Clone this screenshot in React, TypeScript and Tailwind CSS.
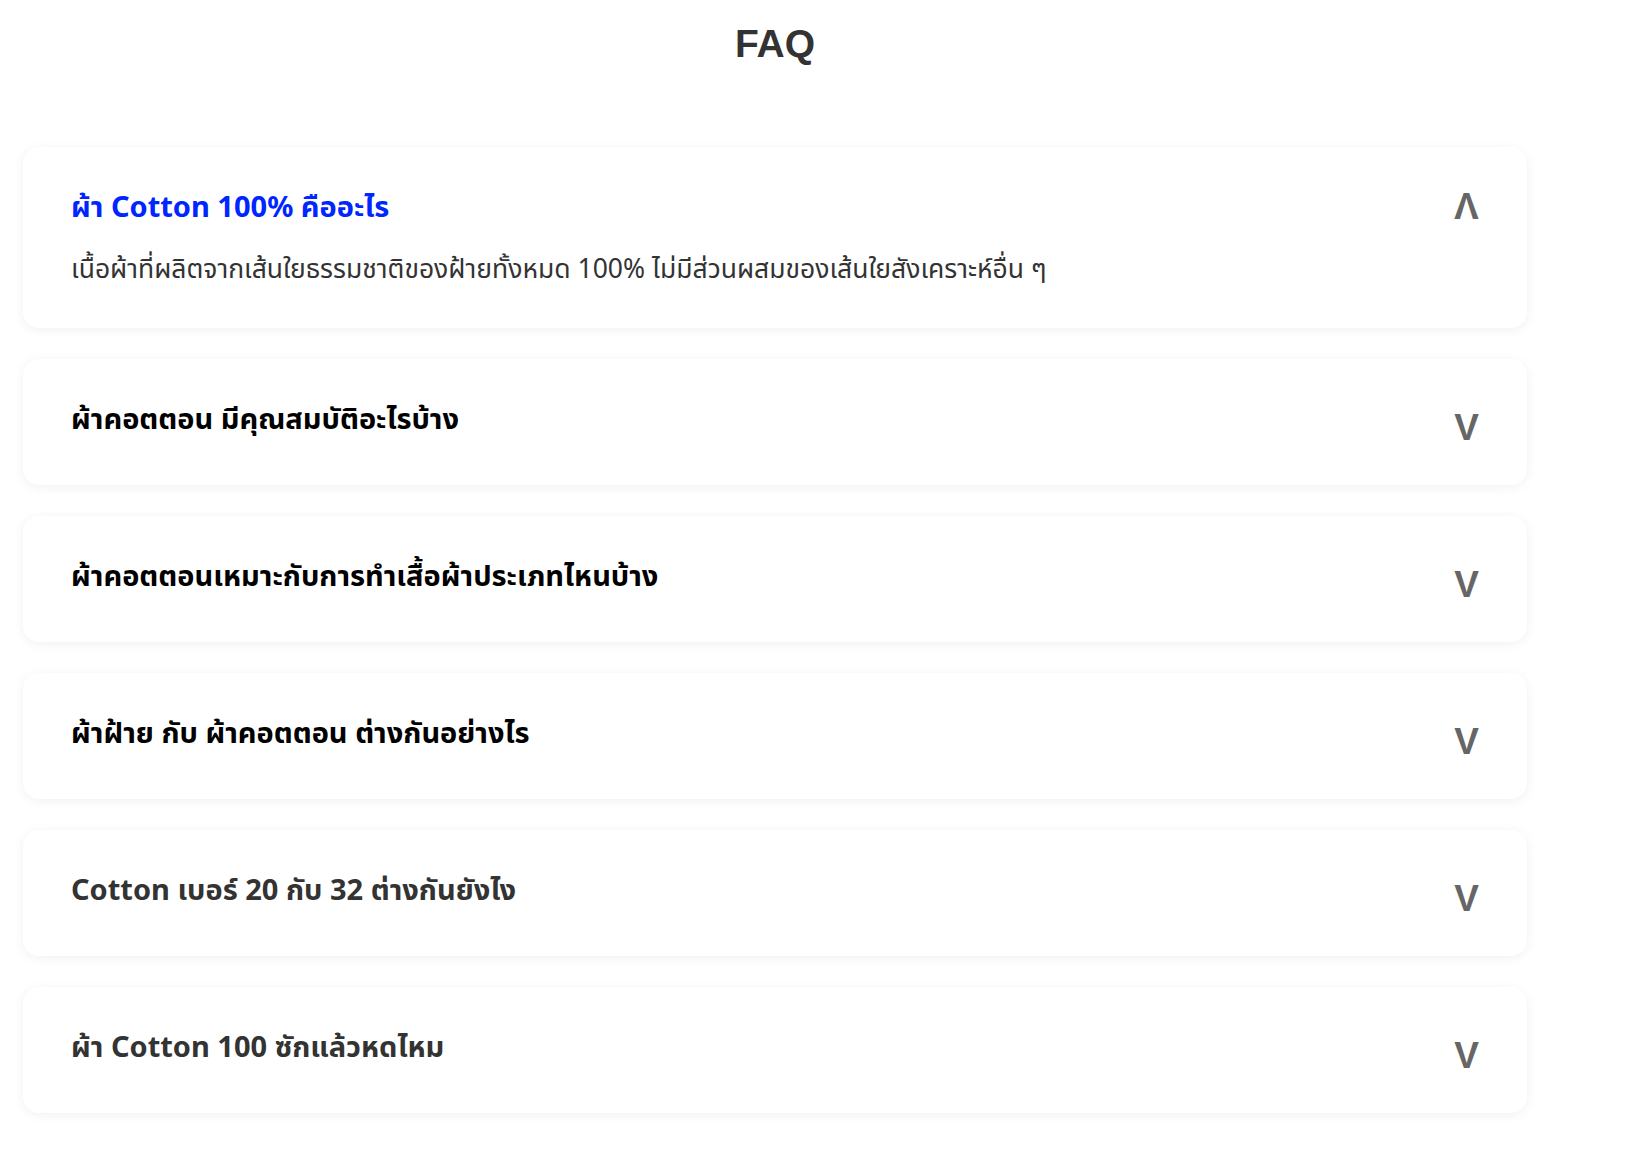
import { useState } from 'react';

type Faq = { q: string; a: string; tone: string };

const faqs: Faq[] = [
  {
    q: 'ผ้า Cotton 100% คืออะไร',
    a: 'เนื้อผ้าที่ผลิตจากเส้นใยธรรมชาติของฝ้ายทั้งหมด 100% ไม่มีส่วนผสมของเส้นใยสังเคราะห์อื่น ๆ',
    tone: 'text-black',
  },
  {
    q: 'ผ้าคอตตอน มีคุณสมบัติอะไรบ้าง',
    a: 'ระบายอากาศได้ดี ดูดซับเหงื่อ สวมใส่สบาย และอ่อนโยนต่อผิว',
    tone: 'text-black',
  },
  {
    q: 'ผ้าคอตตอนเหมาะกับการทำเสื้อผ้าประเภทไหนบ้าง',
    a: 'เหมาะกับเสื้อยืด เสื้อโปโล ชุดนอน และเสื้อผ้าที่ใส่ในชีวิตประจำวัน',
    tone: 'text-black',
  },
  {
    q: 'ผ้าฝ้าย กับ ผ้าคอตตอน ต่างกันอย่างไร',
    a: 'ผ้าฝ้ายและผ้าคอตตอนคือผ้าชนิดเดียวกัน ต่างกันที่การเรียกชื่อเท่านั้น',
    tone: 'text-black',
  },
  {
    q: 'Cotton เบอร์ 20 กับ 32 ต่างกันยังไง',
    a: 'เบอร์ 20 เนื้อผ้าหนากว่า ส่วนเบอร์ 32 เนื้อผ้าบางและนุ่มกว่า',
    tone: 'text-[#333333]',
  },
  {
    q: 'ผ้า Cotton 100 ซักแล้วหดไหม',
    a: 'อาจหดได้เล็กน้อยหลังซักครั้งแรก ควรซักด้วยน้ำเย็นและตากในที่ร่ม',
    tone: 'text-[#333333]',
  },
];

function FaqItem({ item, open, onToggle }: { item: Faq; open: boolean; onToggle: () => void }) {
  return (
    <div className="rounded-2xl bg-white px-12 pt-[36px] pb-[44px] shadow-[0_2px_12px_rgba(0,0,0,0.06)]">
      <button type="button" onClick={onToggle} className="flex h-[46px] w-full items-start justify-between text-left">
        <span className={`text-[29px] font-bold leading-[46px] ${open ? 'text-[#0026ff]' : item.tone}`}>{item.q}</span>
        <span
          className={`block font-['Liberation_Sans',Arial,sans-serif] text-[37px] font-bold leading-[46px] text-[#666666] ${
            open ? '-mt-[1px] rotate-180' : 'mt-[10px]'
          }`}
        >
          V
        </span>
      </button>
      {open && <p className="-mb-[3px] mt-[20px] text-[26.5px] leading-[38px] text-[#333333]">{item.a}</p>}
    </div>
  );
}

export default function App() {
  const [openIndex, setOpenIndex] = useState<number | null>(0);

  return (
    <div className="min-h-screen bg-white font-['Noto_Sans','Noto_Sans_Thai',sans-serif]">
      <div className="w-[1550px] px-[23px] pt-[23px] pb-12">
        <h1 className="mb-[82px] text-center font-['Liberation_Sans',Arial,sans-serif] text-[39px] font-bold leading-[42px] text-[#333333]">
          FAQ
        </h1>
        <div className="flex flex-col gap-[31px]">
          {faqs.map((item, i) => (
            <FaqItem
              key={item.q}
              item={item}
              open={openIndex === i}
              onToggle={() => setOpenIndex(openIndex === i ? null : i)}
            />
          ))}
        </div>
      </div>
    </div>
  );
}
